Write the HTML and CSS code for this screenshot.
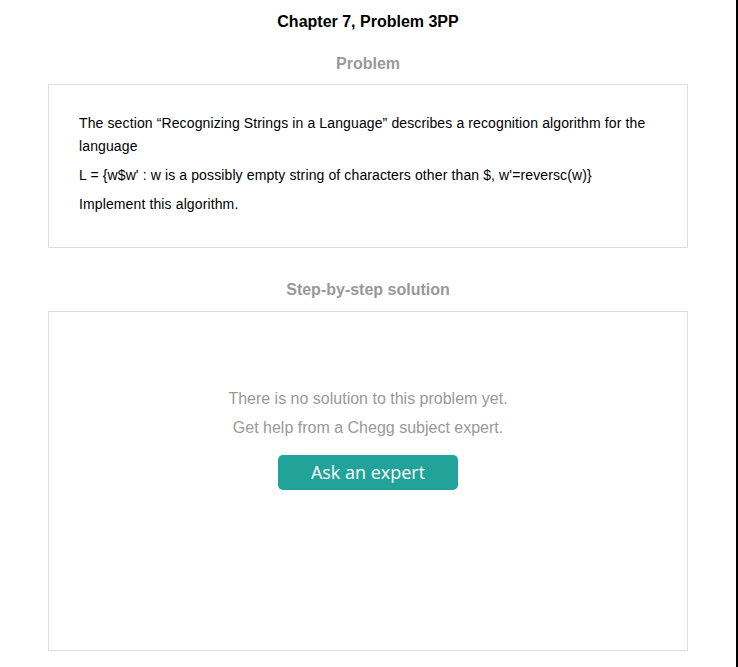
FILE: index.html
```html
<!DOCTYPE html>
<html>
<head>
<meta charset="utf-8">
<link rel="stylesheet" href="styles.css">
</head>
<body>
<div class="page">
  <h1 class="title">Chapter 7, Problem 3PP</h1>
  <h2 class="section-title">Problem</h2>
  <div class="card problem">
    <p>The section “Recognizing Strings in a Language” describes a recognition algorithm for the language</p>
    <p>L = {w$w' : w is a possibly empty string of characters other than $, w'=reversc(w)}</p>
    <p>Implement this algorithm.</p>
  </div>
  <h2 class="section-title step">Step-by-step solution</h2>
  <div class="card solution">
    <p class="muted">There is no solution to this problem yet.</p>
    <p class="muted">Get help from a Chegg subject expert.</p>
    <button class="ask">Ask an expert</button>
  </div>
</div>
</body>
</html>
```

FILE: styles.css
```css
html, body {
  margin: 0;
  padding: 0;
  background: #fff;
}
body {
  font-family: "Liberation Sans", Arial, sans-serif;
  color: #000;
}
.page {
  width: 736px;
  min-height: 667px;
  border-right: 2px solid #000;
  box-sizing: content-box;
  padding-top: 12px;
}
.title {
  margin: 0;
  text-align: center;
  font-size: 16px;
  line-height: 20px;
  font-weight: bold;
}
.section-title {
  margin: 22px 0 0;
  text-align: center;
  font-size: 16px;
  line-height: 20px;
  font-weight: bold;
  color: #999;
}
.section-title.step {
  margin-top: 32px;
}
.card {
  margin: 10px 48px 0;
  border: 1px solid #ddd;
  background: #fff;
}
.problem {
  padding: 27px 30px 31px;
  font-size: 14px;
  line-height: 23px;
  letter-spacing: 0.12px;
}
.problem p {
  margin: 0 0 6px;
}
.problem p:last-child {
  margin-bottom: 0;
}
.solution {
  margin-top: 11px;
  display: flex;
  flex-direction: column;
  align-items: center;
  padding-top: 77px;
  box-sizing: border-box;
  height: 340px;
}
.muted {
  margin: 0 0 10px;
  font-size: 16px;
  line-height: 19px;
  color: #999;
}
.ask {
  margin-top: 8px;
  width: 180px;
  height: 35px;
  border: none;
  border-radius: 5px;
  background: #21a39a;
  color: #fff;
  font-family: "Open Sans", sans-serif;
  font-size: 18px;
  padding: 0;
  line-height: 35px;
}
```
